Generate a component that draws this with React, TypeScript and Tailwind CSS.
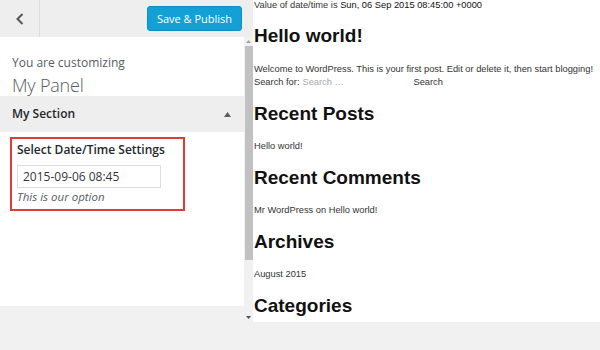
import React from 'react';

const sans = { fontFamily: '"Open Sans", "Noto Sans", sans-serif' };
const arial = { fontFamily: '"Liberation Sans", Arial, sans-serif' };

const Sidebar: React.FC = () => {
  return (
    <div className="w-[253px] flex flex-col" style={sans}>
      <div className="h-[37px] bg-[#eeeeee] flex items-center">
        <div className="w-[40px] h-full border-r border-[#dddddd] flex items-center justify-center">
          <svg width="10" height="12" viewBox="0 0 10 12">
            <polyline points="7.5,1 2.5,6 7.5,11" fill="none" stroke="#50575e" strokeWidth="2" />
          </svg>
        </div>
        <button className="ml-auto mr-[11px] w-[95px] h-[25px] rounded-[3px] bg-[#12a0d7] border border-[#0c90c4] text-white text-[11px] leading-none">
          Save &amp; Publish
        </button>
      </div>

      <div className="h-[285px] flex">
        <div className="w-[244px] flex flex-col">
          <div className="bg-white h-[59px] pt-[18px] pl-[12px]">
            <div className="text-[12px] leading-4 text-[#555d66]">You are customizing</div>
            <div className="mt-[3px] text-[18px] leading-[22px] font-light text-[#555d66] tracking-[-0.2px]">My Panel</div>
          </div>

          <div className="h-[36px] bg-[#eeeeee] flex items-center pl-[12px] pr-[13px]">
            <span className="text-[12px] font-semibold text-[#23282d]">My Section</span>
            <svg className="ml-auto" width="7" height="5" viewBox="0 0 7 5">
              <polygon points="3.5,0 7,5 0,5" fill="#555d66" />
            </svg>
          </div>

          <div className="bg-white h-[174px] pt-[5px] pl-[10px]">
            <div className="w-[175px] border-2 border-[#dd3d36] pt-[3px] pb-[5px] pl-[5px]">
              <div className="text-[12px] leading-4 font-semibold text-[#23282d]">Select Date/Time Settings</div>
              <input
                readOnly
                value="2015-09-06 08:45"
                className="mt-[7px] w-[144px] h-[23px] border border-[#dddddd] pl-[5px] text-[12px] text-[#32373c] bg-white outline-none"
                style={sans}
              />
              <div className="mt-[1px] text-[11.5px] leading-[15px] italic text-[#555d66]">This is our option</div>
            </div>
          </div>
        </div>

        <div className="w-[9px] bg-[#f1f1f1] flex flex-col items-center">
          <div className="h-[9px] flex items-center justify-center">
            <svg width="5" height="3" viewBox="0 0 5 3">
              <polygon points="2.5,0 5,3 0,3" fill="#a3a3a3" />
            </svg>
          </div>
          <div className="w-[8px] h-[214px] bg-[#c1c1c1]" />
          <div className="flex-1" />
          <div className="h-[9px] flex items-center justify-center">
            <svg width="5" height="3" viewBox="0 0 5 3">
              <polygon points="0,0 5,0 2.5,3" fill="#505050" />
            </svg>
          </div>
        </div>
      </div>
    </div>
  );
};

const Preview: React.FC = () => {
  const h = 'text-[19px] leading-[22px] font-bold text-[#111111]';
  const p = 'text-[9.3px] leading-[13px] text-[#333333]';
  return (
    <div className="w-[347px] h-[322px] bg-white overflow-hidden pl-[1px]" style={arial}>
      <div className="text-[9.3px] leading-[11px] text-[#333333]">
        Value of date/time is <span className="text-[#111111]">Sun, 06 Sep 2015 08:45:00 +0000</span>
      </div>
      <h1 className={`${h} mt-[14px]`}>Hello world!</h1>
      <div className={`${p} mt-[16px]`}>
        Welcome to WordPress. This is your first post. Edit or delete it, then start blogging!
      </div>
      <div className={`${p} flex items-center`}>
        <span>Search for:</span>
        <input
          readOnly
          placeholder="Search …"
          className="w-[113px] ml-[1px] px-[2px] text-[9.3px] leading-[13px] h-[13px] bg-transparent outline-none placeholder:text-[#aaaaaa]"
          style={arial}
        />
        <span>Search</span>
      </div>
      <h2 className={`${h} mt-[14px]`}>Recent Posts</h2>
      <div className={`${p} mt-[15px]`}>Hello world!</div>
      <h2 className={`${h} mt-[14px]`}>Recent Comments</h2>
      <div className={`${p} mt-[15px]`}>Mr WordPress on Hello world!</div>
      <h2 className={`${h} mt-[14px]`}>Archives</h2>
      <div className={`${p} mt-[15px]`}>August 2015</div>
      <h2 className={`${h} mt-[14px]`}>Categories</h2>
    </div>
  );
};

const App: React.FC = () => {
  return (
    <div className="w-[600px] h-[350px] bg-[#f1f1f1] flex overflow-hidden">
      <Sidebar />
      <Preview />
    </div>
  );
};

export default App;
